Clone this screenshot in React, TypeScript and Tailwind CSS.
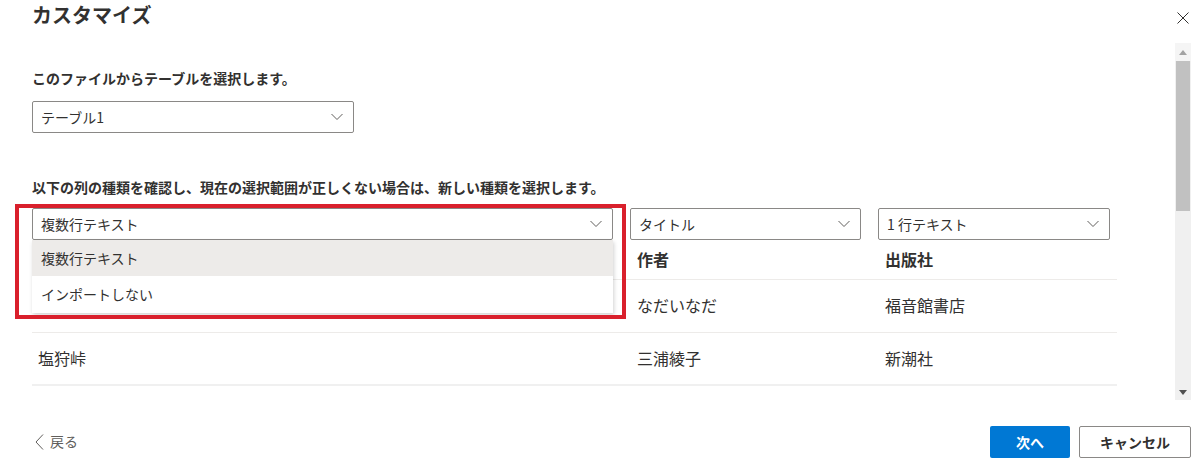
import React from "react";

const font = { fontFamily: '"Noto Sans CJK JP", "Noto Sans", sans-serif' };

function Chevron() {
  return (
    <svg width="12" height="8" viewBox="0 0 12 8" fill="none">
      <path d="M0.5 1L6 6.5L11.5 1" stroke="#605e5c" strokeWidth="1" />
    </svg>
  );
}

function Select({ label, w }: { label: string; w: string }) {
  return (
    <div
      className={`${w} h-[32px] border border-[#8a8886] rounded-[2px] bg-white flex items-center justify-between pl-[8px] pr-[10px] text-[14px] text-[#323130]`}
    >
      <span>{label}</span>
      <Chevron />
    </div>
  );
}

export default function App() {
  return (
    <div
      className="w-[1200px] h-[466px] bg-white flex flex-col text-[#323130] overflow-hidden"
      style={font}
    >
      {/* header */}
      <div className="h-[43px] flex items-start justify-between shrink-0">
        <h1 className="pl-[32px] pt-[1px] text-[20px] leading-[28px] font-bold text-[#323130]">
          カスタマイズ
        </h1>
        <div className="mr-[11px] mt-[12px] w-[12px] h-[12px]">
          <svg width="12" height="12" viewBox="0 0 12 12">
            <path d="M0.5 0.5L11.5 11.5M11.5 0.5L0.5 11.5" stroke="#323130" strokeWidth="1" />
          </svg>
        </div>
      </div>

      {/* body */}
      <div className="h-[357px] flex shrink-0">
        <div className="relative flex-1 pl-[32px]">
          <p className="mt-[25px] text-[14px] leading-[20px] font-bold">
            このファイルからテーブルを選択します。
          </p>
          <div className="mt-[13px]">
            <Select label="テーブル1" w="w-[322px]" />
          </div>
          <p className="mt-[44px] text-[14px] leading-[20px] font-bold">
            以下の列の種類を確認し、現在の選択範囲が正しくない場合は、新しい種類を選択します。
          </p>

          <div className="mt-[11px] w-[1085px]">
            <div className="grid grid-cols-[598px_248px_239px]">
              <div className="relative">
                <Select label="複数行テキスト" w="w-[581px]" />
                <div className="absolute left-0 top-full w-[581px] bg-white shadow-[1px_2px_4px_rgba(0,0,0,0.18)] z-10 text-[14px]">
                  <div className="h-[36px] bg-[#edebe9] flex items-center pl-[9px]">複数行テキスト</div>
                  <div className="h-[37px] bg-white flex items-center pl-[9px]">インポートしない</div>
                </div>
              </div>
              <Select label="タイトル" w="w-[231px]" />
              <Select label="1 行テキスト" w="w-[232px]" />
            </div>

            <div className="grid grid-cols-[598px_248px_239px] text-[16px] text-[#323130]">
              <div className="h-[40px] border-b border-[#edebe9]" />
              <div className="h-[40px] flex items-center pl-[7px] pb-[1px] font-bold border-b border-[#edebe9]">作者</div>
              <div className="h-[40px] flex items-center pl-[7px] pb-[1px] font-bold border-b border-[#edebe9]">出版社</div>

              <div className="h-[53px] border-b border-[#edebe9]" />
              <div className="h-[53px] flex items-center pl-[7px] pb-[3px] border-b border-[#edebe9]">なだいなだ</div>
              <div className="h-[53px] flex items-center pl-[7px] pb-[3px] border-b border-[#edebe9]">福音館書店</div>

              <div className="h-[53px] flex items-center pl-[6px] pb-[2px] border-b-[2px] border-[#f0f0f0]">塩狩峠</div>
              <div className="h-[53px] flex items-center pl-[7px] pb-[2px] border-b-[2px] border-[#f0f0f0]">三浦綾子</div>
              <div className="h-[53px] flex items-center pl-[7px] pb-[2px] border-b-[2px] border-[#f0f0f0]">新潮社</div>
            </div>
          </div>

          {/* red annotation */}
          <div className="absolute left-[15px] top-[161px] w-[611px] h-[115px] border-[4px] border-[#d9202c] z-20 pointer-events-none" />
        </div>

        {/* scrollbar */}
        <div className="w-[16px] mr-[9px] bg-[#f0f0f0] flex flex-col">
          <div className="h-[18px] bg-[#f5f5f5] flex items-center justify-center">
            <svg width="8" height="5" viewBox="0 0 8 5">
              <path d="M4 0L8 5H0Z" fill="#a3a3a3" />
            </svg>
          </div>
          <div className="h-[150px] mx-[1px] bg-[#c1c1c1]" />
          <div className="flex-1" />
          <div className="h-[16px] flex items-center justify-center">
            <svg width="8" height="5" viewBox="0 0 8 5">
              <path d="M0 0H8L4 5Z" fill="#505050" />
            </svg>
          </div>
        </div>
      </div>

      {/* footer */}
      <div className="flex-1 flex items-start justify-between pt-[26px] pr-[9px]">
        <div className="ml-[35px] mt-[5px] flex items-center gap-[6px] text-[14px] text-[#605e5c]">
          <svg width="9" height="16" viewBox="0 0 9 16">
            <path d="M8 0.5L1 8L8 15.5" stroke="#605e5c" strokeWidth="1" fill="none" />
          </svg>
          <span>戻る</span>
        </div>
        <div className="flex gap-[9px]">
          <button className="w-[80px] h-[32px] bg-[#0078d4] text-white text-[14px] font-bold rounded-[2px]">
            次へ
          </button>
          <button className="w-[112px] h-[32px] bg-white border border-[#8a8886] text-[#323130] text-[14px] font-bold rounded-[2px]">
            キャンセル
          </button>
        </div>
      </div>
    </div>
  );
}
